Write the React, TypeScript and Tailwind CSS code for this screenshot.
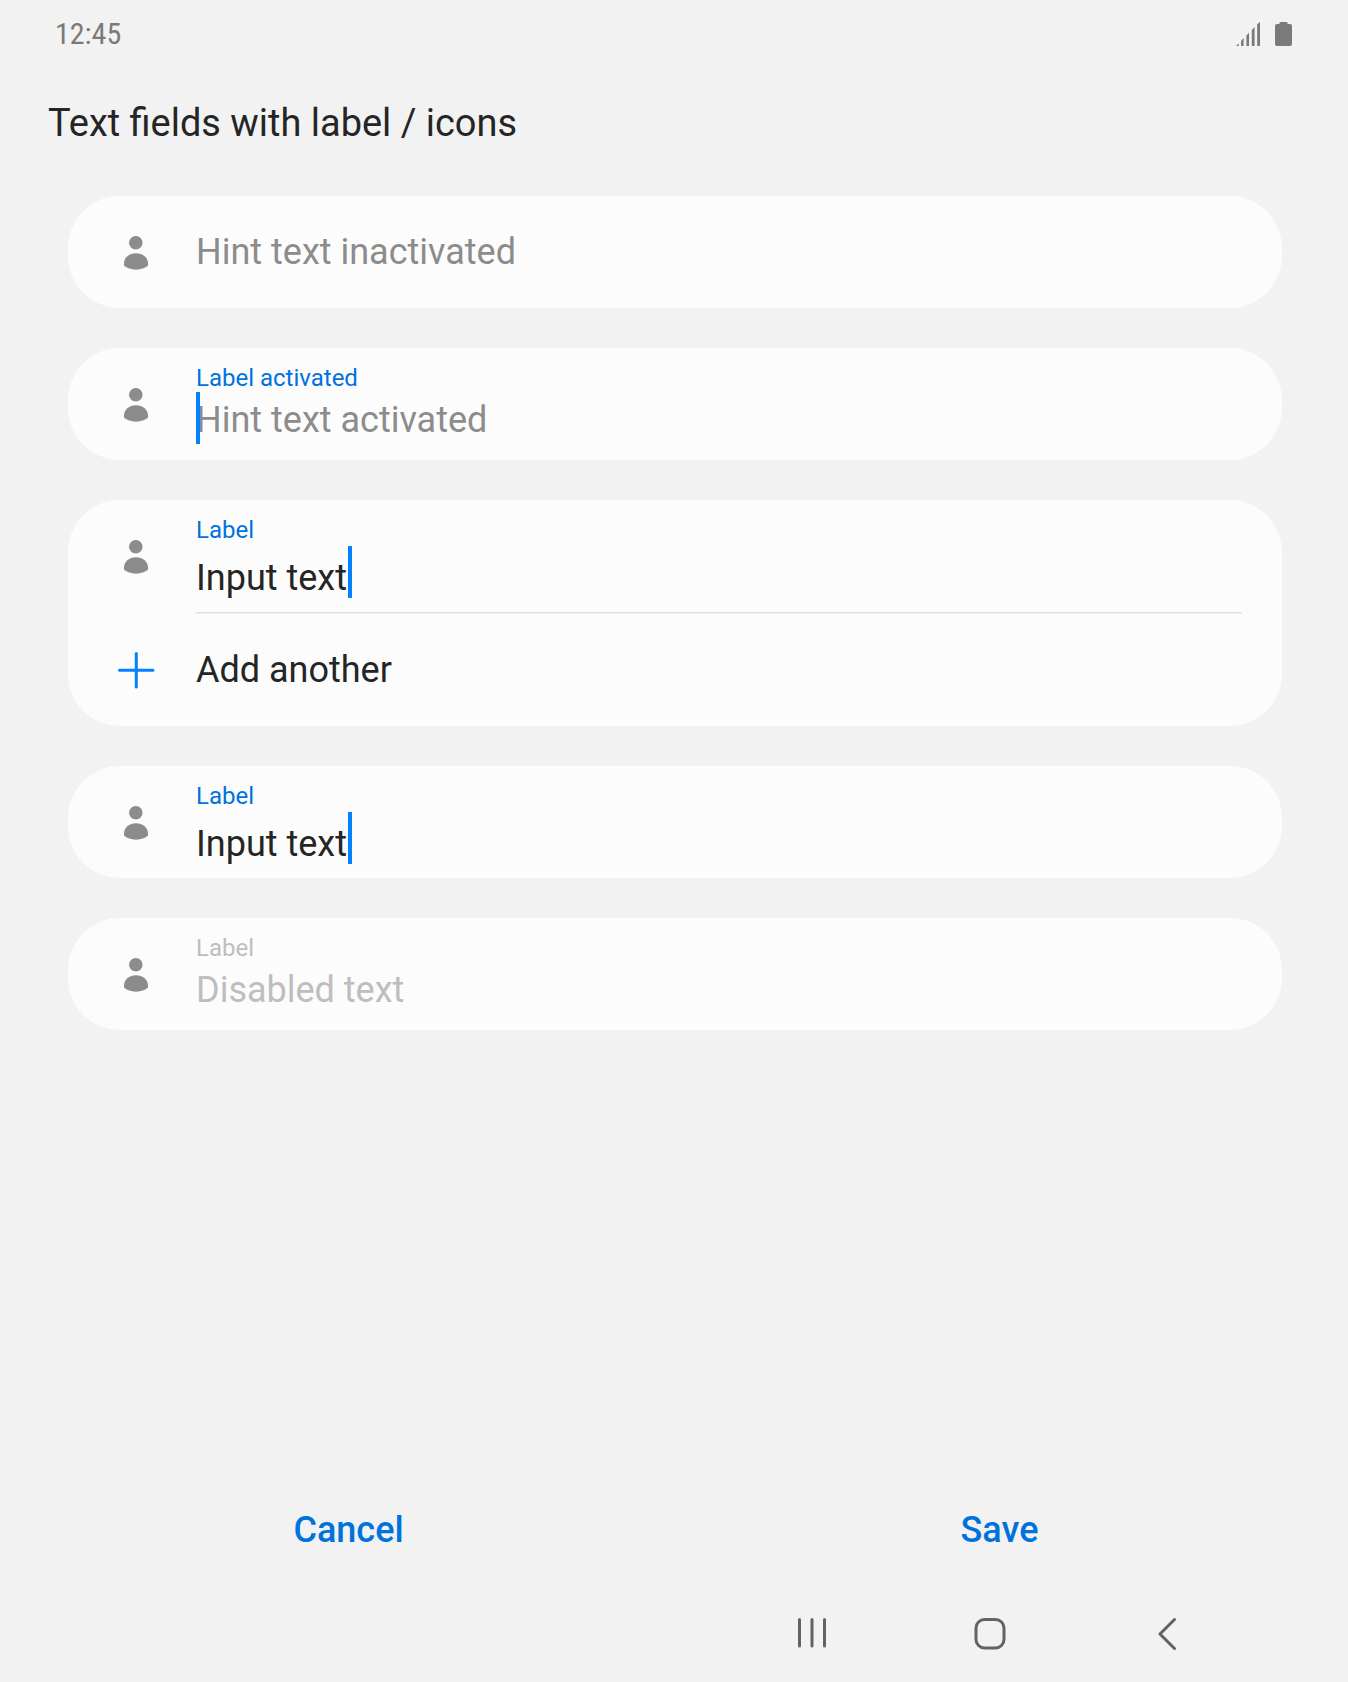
import type { ReactNode } from "react";

function PersonIcon() {
  return (
    <svg className="h-9 w-6 shrink-0" viewBox="0 0 24 36" fill="#8c8c8c">
      <circle cx="11.8" cy="8.7" r="6.8" />
      <path d="M0 29.7C0 23.5 5 19.3 12 19.3S24 23.5 24 29.7V31.6C21.5 34.2 17 35.7 12 35.7S2.5 34.2 0 31.6Z" />
    </svg>
  );
}

function PlusIcon() {
  return (
    <svg className="size-9 shrink-0 overflow-visible" viewBox="0 0 36 36" stroke="#0381fe" strokeWidth="3" strokeLinecap="round">
      <path d="M1.5 18.3H35M18.3 1.5V35" />
    </svg>
  );
}

function Card({ children }: { children: ReactNode }) {
  return <section className="rounded-[52px] bg-[#fcfcfc]">{children}</section>;
}

function Row({ icon, children }: { icon: ReactNode; children: ReactNode }) {
  return (
    <div className="flex h-28">
      <div className="flex w-32 shrink-0 items-center pl-14">{icon}</div>
      <div className="flex flex-1 flex-col">{children}</div>
    </div>
  );
}

function Label({ className, children }: { className: string; children: ReactNode }) {
  return <div className={`mt-4 text-[24px] leading-7 ${className}`}>{children}</div>;
}

function InputField() {
  return (
    <Row icon={<PersonIcon />}>
      <Label className="text-[#0072de]">Label</Label>
      <div className="mt-0.5 flex h-[52px] items-end">
        <span className="w-[152px] text-[36px] leading-10 whitespace-nowrap text-[#252525]">Input text</span>
        <span className="h-[52px] w-1 bg-[#0381fe]" />
      </div>
    </Row>
  );
}

export default function App() {
  return (
    <main className="flex h-[1682px] w-[1348px] flex-col overflow-hidden bg-[#f2f2f2] font-['Roboto',sans-serif]">
      <header className="flex h-[68px] items-center justify-between pr-14 pl-[55px] text-[#7a7a7a]">
        <time className="text-[30px] leading-9 [font-stretch:75%]">12:45</time>
        <div className="flex items-start gap-[15px]">
          <svg className="h-6 w-6" viewBox="0 0 24 24" fill="currentColor">
            <path d="M0 24L2.8 21.5V24ZM5 19L7.6 16V24H5ZM10.4 13.5L13 10.7V24H10.4ZM15.8 8L18.6 5V24H15.8ZM21.2 2.2L24 0V24H21.2Z" />
          </svg>
          <svg className="h-6 w-[17px]" viewBox="0 0 17 24" fill="currentColor">
            <path d="M5.5 0H11.5Q12.7 0 12.7 2H15Q17 2 17 4V22Q17 24 15 24H2Q0 24 0 22V4Q0 2 2 2H4.3Q4.3 0 5.5 0Z" />
          </svg>
        </div>
      </header>
      <h1 className="mt-8 ml-12 text-[37.95px] leading-[46px] text-[#252525]">Text fields with label / icons</h1>
      <div className="mx-[68px] mt-[50px] flex w-[1214px] flex-col gap-10">
        <Card>
          <Row icon={<PersonIcon />}>
            <div className="my-auto text-[36px] leading-10 text-[#8c8c8c]">Hint text inactivated</div>
          </Row>
        </Card>
        <Card>
          <Row icon={<PersonIcon />}>
            <Label className="text-[#0072de]">Label activated</Label>
            <div className="relative h-[52px] pt-2 text-[36px] leading-10 text-[#8c8c8c]">
              Hint text activated
              <span className="absolute top-0 left-0 h-[52px] w-1 bg-[#0381fe]" />
            </div>
          </Row>
        </Card>
        <Card>
          <InputField />
          <div className="mr-10 ml-32 h-0.5 border-t border-[#e2e2e2] bg-[#ededed]" />
          <Row icon={<div className="-ml-1.5"><PlusIcon /></div>}>
            <div className="my-auto text-[36px] leading-10 text-[#252525]">Add another</div>
          </Row>
        </Card>
        <Card>
          <InputField />
        </Card>
        <Card>
          <Row icon={<PersonIcon />}>
            <Label className="text-[#bebebe]">Label</Label>
            <div className="mt-2 text-[36px] leading-10 text-[#bebebe]">Disabled text</div>
          </Row>
        </Card>
      </div>
      <div className="mt-auto flex h-[84px] items-center px-[23px] text-[36px] leading-10 font-medium text-[#0072de]">
        <button className="flex-1">Cancel</button>
        <button className="flex-1">Save</button>
      </div>
      <nav className="flex h-[110px] pt-11 pl-[797px]" aria-label="Navigation">
        <svg className="h-[34px] w-[396px]" viewBox="0 0 396 34" fill="none" stroke="#636363" strokeWidth="3" strokeLinecap="round" strokeLinejoin="round">
          <path d="M2.5 3.5V30M15 3.5V30M27.5 3.5V30" />
          <rect x="179" y="3.5" width="28" height="28.5" rx="8.5" />
          <path d="M377.5 3.5L363 18L377.5 32.5" />
        </svg>
      </nav>
    </main>
  );
}
